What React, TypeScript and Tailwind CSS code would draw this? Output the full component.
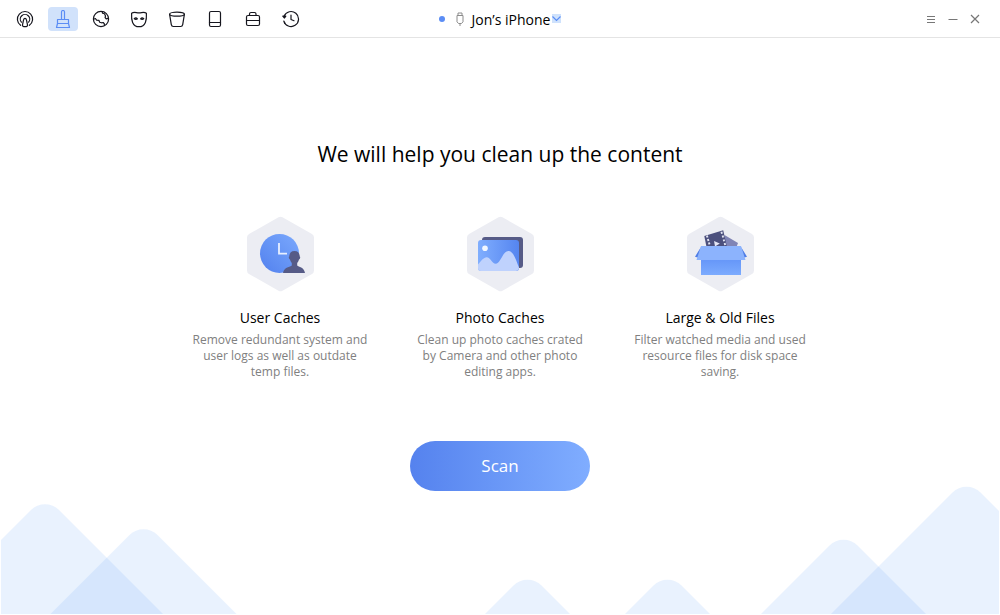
import type { ReactNode } from 'react'

function ToolIcon({ children }: { children: ReactNode }) {
  return (
    <svg
      viewBox="0 0 18 18"
      className="size-[18px]"
      fill="none"
      stroke="currentColor"
      strokeWidth="1.2"
      strokeLinecap="round"
      strokeLinejoin="round"
      aria-hidden="true"
    >
      {children}
    </svg>
  )
}

const tools = [
  {
    name: 'AirDrop',
    icon: (
      <>
        <path d="M4.6 15.3a7.6 7.6 0 1 1 8.8 0" />
        <path d="M5.4 12.2a4.7 4.7 0 1 1 7.2 0" />
        <path d="M9 8.4c1 0 1.3.8 1.5 1.8l1 4.6c.3 1.4-.8 1.9-2.5 1.9s-2.8-.5-2.5-1.9l1-4.6C7.7 9.2 8 8.4 9 8.4z" />
      </>
    ),
  },
  {
    name: 'Cleaner',
    active: true,
    icon: (
      <>
        <path d="M7.5 9.5V2a1.5 1.5 0 0 1 3 0v7.5" />
        <path d="M3.5 9.5h11v4h-11zM3.5 13.5l-1 4h13l-1-4" />
      </>
    ),
  },
  {
    name: 'Browser',
    icon: (
      <>
        <circle cx="9" cy="9" r="7.6" />
        <path d="M1.6 9.2l1.8-.7 1.2 1.6 2.3.2.8 1.9 1.9.6 1.6-.3 1.2 1.3-.1 1.6" />
        <path d="M10.2 1.6l.3 1.6 2 .6 1 2.200-.4 1.500 1.100 1.300 1.900-.4" />
      </>
    ),
  },
  {
    name: 'Privacy',
    icon: (
      <>
        <path d="M1.6 3.2C4 1.7 6 2.8 9 2.8s5-1.100 7.400.4c.2 3.500.1 6.500-1 9.200-1 2.400-3.400 4.300-6.400 4.300s-5.400-1.900-6.400-4.300c-1.100-2.700-1.200-5.700-1-9.200z" />
        <path d="M4.200 8.600c1.100-.9 2.300-.9 3.200.2-.8.8-2.300.8-3.200-.2zM13.800 8.600c-1.100-.9-2.300-.9-3.200.2.8.8 2.300.8 3.200-.2z" />
      </>
    ),
  },
  {
    name: 'Uninstaller',
    icon: (
      <>
        <ellipse cx="9" cy="4.2" rx="7.4" ry="2" />
        <path d="M1.6 4.4l1.7 10.2c.2 1.200.8 1.900 2 1.900h7.400c1.200 0 1.800-.7 2-1.900l1.700-10.200" />
      </>
    ),
  },
  {
    name: 'Device',
    icon: (
      <>
        <rect x="3.5" y="1.5" width="11" height="15" rx="1.5" />
        <path d="M3.5 12.5h11" />
      </>
    ),
  },
  {
    name: 'Toolbox',
    icon: (
      <>
        <rect x="2.5" y="5.5" width="13" height="10" rx="1.5" />
        <path d="M5.500 5.500V4A1.500 1.500 0 0 1 7 2.500h3.500A1.500 1.500 0 0 1 12 4v1.500M2.500 10.500h13" />
      </>
    ),
  },
  {
    name: 'History',
    icon: (
      <>
        <path d="M2.1 6.2a7.5 7.5 0 1 1-.3 4.8" />
        <path d="M2.7 13.3l-.2-.4" />
        <path d="M.8 6.2h3L2.5 8z" fill="currentColor" />
        <path d="M9 5v4.5l3 1.2" />
      </>
    ),
  },
]

function FeatureIcon({ children }: { children: ReactNode }) {
  return (
    <svg viewBox="0 0 68 76" className="h-[76px] w-[68px]" aria-hidden="true">
      <path
        d="M34.500 4.800L64 21.500v33L34.500 71.200 5 54.500v-33z"
        fill="#ecedf3"
        stroke="#ecedf3"
        strokeWidth="8"
        strokeLinejoin="round"
      />
      {children}
    </svg>
  )
}

const features = [
  {
    title: 'User Caches',
    text: 'Remove redundant system and user logs as well as outdate temp files.',
    icon: (
      <>
        <defs>
          <linearGradient id="clock" x1="0" y1="1" x2="1" y2="0">
            <stop offset="0" stopColor="#5281ee" />
            <stop offset="1" stopColor="#7ba9fd" />
          </linearGradient>
        </defs>
        <circle cx="33.5" cy="37.4" r="19.5" fill="url(#clock)" />
        <path d="M33 27v10.700h8" fill="none" stroke="#e8f0ff" strokeWidth="1.8" />
        <path
          d="M48.500 35c3.300 0 5.300 2.200 5.200 5.600.5.200.6.700.4 1.500-.2.900-.6 1.400-1.100 1.500-.4 1.600-1 2.600-1.800 3.400v2.600c1.400 1.400 6.800 1.500 7.800 7.400H37c1-5.900 7.400-6 8.800-7.400V47c-.8-.8-1.400-1.800-1.800-3.400-.5-.1-.9-.6-1.100-1.500-.2-.8-.1-1.300.4-1.500-.1-3.400 1.900-5.600 5.200-5.600z"
          fill="#565b87"
        />
      </>
    ),
  },
  {
    title: 'Photo Caches',
    text: 'Clean up photo caches crated by Camera and other photo editing apps.',
    icon: (
      <>
        <defs>
          <linearGradient id="photo">
            <stop offset="0" stopColor="#80aefe" />
            <stop offset="1" stopColor="#5585f0" />
          </linearGradient>
        </defs>
        <rect x="16" y="21" width="41" height="31" rx="3" fill="#565b87" />
        <rect x="12" y="24" width="41" height="31" rx="3" fill="url(#photo)" />
        <circle cx="19" cy="32.3" r="2.8" fill="#f2f7ff" />
        <path
          d="M12 48.500c3-3.500 5.500-7.300 8.700-7.300 3.600 0 5.500 6.600 9 6.600 4.800 0 7-12.800 12.600-12.800 5.500 0 7.700 9.500 10.700 16.500a3.500 3.500 0 0 1-3.500 3.500H15a3 3 0 0 1-3-3z"
          fill="#bfd2fd"
        />
      </>
    ),
  },
  {
    title: 'Large & Old Files',
    text: 'Filter watched media and used resource files for disk space saving.',
    icon: (
      <>
        <defs>
          <linearGradient id="box" x1="0" y1="0" x2="0" y2="1">
            <stop offset="0" stopColor="#6596f8" />
            <stop offset="1" stopColor="#7cabfe" />
          </linearGradient>
        </defs>
        <path d="M38.500 19l13.500 8-1.500 4h-12z" fill="#8084b5" />
        <path d="M18.300 20l18.900-5.700L41 31H20.500z" fill="#4c507d" />
        <path
          d="M20.300 20.900l1.800-.6M21.300 24.300l1.800-.6M22.300 27.700l1.800-.6M34.800 17l1.800-.5M36 20.800l1.800-.5M37 24.600l1.800-.5M38 28.300l1.800-.5"
          stroke="#e4e6f4"
          strokeWidth="2"
        />
        <path d="M28 25l5.800 2.600L29 30.500z" fill="#e4e6f4" />
        <path d="M15 31L9 40.700l3.500 1zM55 31l6 9.700-3.500 1z" fill="#4f7de6" />
        <path d="M15 43h40v16H15z" fill="url(#box)" />
        <path d="M15 30h40l4.500 14h-49z" fill="#8cb3fd" />
      </>
    ),
  },
]

// peak position of each hill, before rounding
const hills = [
  { x: 45, y: 496 },
  { x: 143.5, y: 521 },
  { x: 527.5, y: 571.5 },
  { x: 667.5, y: 571.5 },
  { x: 843.5, y: 531.5 },
  { x: 966.5, y: 478.5 },
]

function Hills() {
  return (
    <svg
      viewBox="1 485 998 129"
      className="pointer-events-none absolute inset-x-px bottom-px -z-10"
      fill="#62a2f8"
      fillOpacity="0.14"
      aria-hidden="true"
    >
      {hills.map(({ x, y }) => (
        <path
          key={x}
          d={`M${x - 150} ${y + 150}L${x - 14} ${y + 14}A20 20 0 0 1 ${x + 14} ${y + 14}L${x + 150} ${y + 150}z`}
        />
      ))}
    </svg>
  )
}

function TitleBar() {
  return (
    <header className="grid h-[38px] grid-cols-[1fr_auto_1fr] items-center border-b border-[#e4e4e4] bg-white">
      <nav className="flex gap-2 pl-2.5">
        {tools.map((tool) => (
          <button
            key={tool.name}
            type="button"
            aria-label={tool.name}
            className={
              tool.active
                ? 'flex h-6 w-[30px] items-center justify-center rounded bg-[#d1e2fb] text-[#5b8df5]'
                : 'flex h-6 w-[30px] items-center justify-center rounded text-[#16161e]'
            }
          >
            <ToolIcon>{tool.icon}</ToolIcon>
          </button>
        ))}
      </nav>

      <button type="button" className="flex items-center text-sm leading-5 text-black">
        <span className="size-1.5 rounded-full bg-[#5b8df5]" />
        <svg viewBox="0 0 8 14" className="ml-[11px] h-3.5 w-2" fill="none" stroke="#8c8c8c" aria-hidden="true">
          <path d="M2 3.5V1h4v2.5M1 3.5h6v6.3l-1.5 1.7h-3L1 9.800zM4 11.500V14" />
        </svg>
        <span className="ml-2 pt-0.5">Jon’s iPhone</span>
        <svg viewBox="0 0 9 9" className="ml-0.5 size-[9px] bg-[#cfe2fc]" fill="none" stroke="#5b8df5" strokeWidth="1.2" aria-hidden="true">
          <path d="M.5 2.500l4 4 4-4" />
        </svg>
      </button>

      <div className="flex justify-end pr-3.5 text-[#777]">
        <button type="button" aria-label="Menu" className="flex h-6 w-[22px] items-center justify-center">
          <svg viewBox="0 0 10 10" className="size-2.5" stroke="currentColor">
            <path d="M1 2.500h8M1 5.500h8M1 8.500h8" />
          </svg>
        </button>
        <button type="button" aria-label="Minimize" className="flex h-6 w-[22px] items-center justify-center">
          <svg viewBox="0 0 10 10" className="size-2.5" stroke="currentColor">
            <path d="M.5 5.500h9" />
          </svg>
        </button>
        <button type="button" aria-label="Close" className="flex h-6 w-[22px] items-center justify-center">
          <svg viewBox="0 0 10 10" className="size-2.5" stroke="currentColor" strokeWidth="1.2">
            <path d="M1 1l8 8M9 1L1 9" />
          </svg>
        </button>
      </div>
    </header>
  )
}

export default function App() {
  return (
    <div className="relative isolate min-h-screen overflow-hidden bg-white font-['Open_Sans','Noto_Sans',sans-serif]">
      <TitleBar />
      <Hills />

      <main className="flex flex-col items-center pt-[100px] pb-16">
        <h1 className="text-[21px] leading-8 text-black">We will help you clean up the content</h1>

        <div className="mt-[46px] flex justify-center gap-11">
          {features.map((feature) => (
            <section key={feature.title} className="flex w-44 flex-col items-center text-center">
              <FeatureIcon>{feature.icon}</FeatureIcon>
              <h2 className="mt-4 text-sm leading-5 text-black">{feature.title}</h2>
              <p className="mt-1 text-xs leading-4 text-[#808080]">{feature.text}</p>
            </section>
          ))}
        </div>

        <button
          type="button"
          className="mt-[61px] h-[50px] w-[180px] rounded-full bg-linear-to-r from-[#5582ee] to-[#80adff] text-[17px] text-white"
        >
          Scan
        </button>
      </main>
    </div>
  )
}
